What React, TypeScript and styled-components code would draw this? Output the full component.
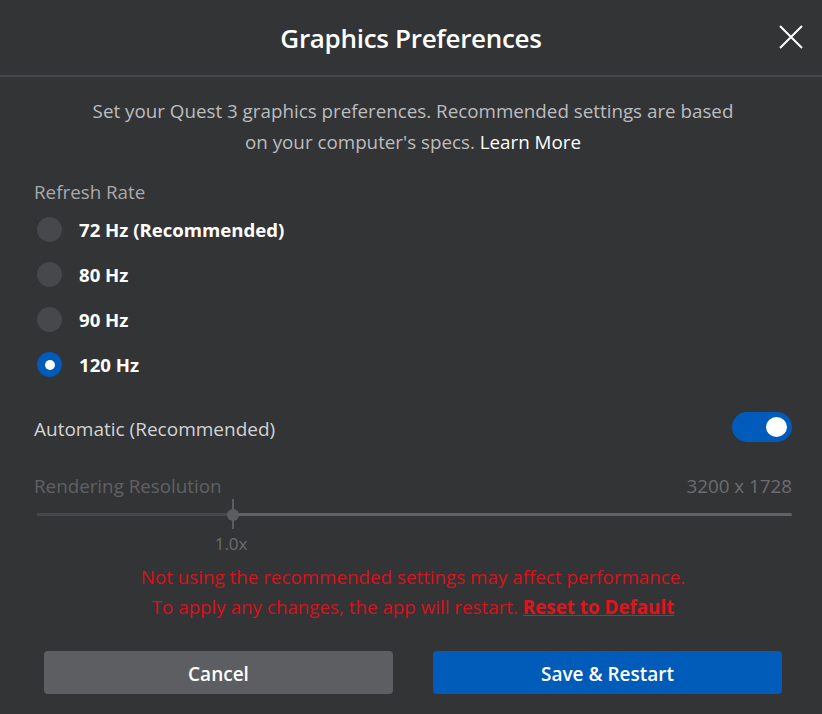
import React, { useState } from 'react';
import styled, { createGlobalStyle, css } from 'styled-components';

const GlobalStyle = createGlobalStyle`
  html, body {
    margin: 0;
    padding: 0;
    background: #333436;
  }
  body {
    font-family: "Open Sans", "Noto Sans", sans-serif;
  }
`;

const Dialog = styled.div`
  width: 822px;
  height: 714px;
  background: #333436;
  color: #ffffff;
  display: flex;
  flex-direction: column;
  box-sizing: border-box;
`;

const Header = styled.header`
  position: relative;
  height: 77px;
  display: flex;
  align-items: center;
  justify-content: center;
  border-bottom: 2px solid #46474a;
  box-sizing: border-box;
`;

const Title = styled.h1`
  margin: 0;
  font-size: 26px;
  line-height: 34px;
  font-weight: 600;
  letter-spacing: -0.3px;
`;

const CloseButton = styled.button`
  position: absolute;
  right: 16px;
  top: 22px;
  width: 30px;
  height: 30px;
  padding: 0;
  border: none;
  background: none;
  cursor: pointer;
  display: flex;
  align-items: center;
  justify-content: center;
`;

const Body = styled.div`
  display: flex;
  flex-direction: column;
  padding: 19px 30px 0 34px;
`;

const Intro = styled.p`
  margin: 0 0 22px;
  text-align: center;
  font-size: 18.8px;
  line-height: 31px;
  color: #bcbdbf;
`;

const LearnMore = styled.a`
  color: #ffffff;
  text-decoration: none;
  cursor: pointer;
`;

const SectionLabel = styled.div<{ $dim?: boolean }>`
  font-size: 18.8px;
  line-height: 24px;
  color: ${({ $dim }) => ($dim ? '#606164' : '#a8a9ab')};
`;

const RadioList = styled.div`
  display: flex;
  flex-direction: column;
  gap: 20px;
  margin-top: 13px;
  padding-left: 3px;
`;

const RadioRow = styled.label`
  display: flex;
  align-items: center;
  gap: 17px;
  cursor: pointer;
  height: 25px;
`;

const RadioDot = styled.span<{ $checked: boolean }>`
  width: 25px;
  height: 25px;
  border-radius: 50%;
  flex-shrink: 0;
  display: flex;
  align-items: center;
  justify-content: center;
  background: #47484b;
  ${({ $checked }) =>
    $checked &&
    css`
      background: #005bbb;
      &::after {
        content: '';
        width: 10px;
        height: 10px;
        border-radius: 50%;
        background: #ffffff;
      }
    `}
`;

const RadioText = styled.span`
  font-size: 18.6px;
  line-height: 25px;
  font-weight: 700;
  color: #ffffff;
`;

const ToggleRow = styled.div`
  display: flex;
  align-items: center;
  justify-content: space-between;
  margin-top: 35px;
`;

const ToggleLabel = styled.span`
  font-size: 19px;
  line-height: 26px;
  margin-top: 4px;
  color: #d2d3d5;
`;

const Toggle = styled.button<{ $on: boolean }>`
  position: relative;
  width: 60px;
  height: 30px;
  border: none;
  border-radius: 15px;
  padding: 0;
  cursor: pointer;
  background: ${({ $on }) => ($on ? '#005bbb' : '#5d5e61')};
  &::after {
    content: '';
    position: absolute;
    top: 5px;
    left: ${({ $on }) => ($on ? '34px' : '5px')};
    width: 21px;
    height: 20px;
    border-radius: 50%;
    background: #ffffff;
  }
`;

const ResolutionHead = styled.div`
  display: flex;
  justify-content: space-between;
  align-items: center;
  margin-top: 32px;
`;

const ResolutionValue = styled.span`
  font-size: 18.8px;
  line-height: 24px;
  color: #6c6d70;
`;

const SliderWrap = styled.div`
  position: relative;
  height: 30px;
  margin: 1px 0 0 3px;
`;

const Track = styled.div`
  position: absolute;
  left: 0;
  right: 0;
  top: 14px;
  height: 3px;
  background: #616265;
  border-radius: 2px;
`;

const TrackFill = styled.div`
  position: absolute;
  left: 0;
  top: 14px;
  height: 3px;
  background: #47484b;
  border-radius: 2px;
`;

const Tick = styled.div`
  position: absolute;
  top: 0;
  width: 2px;
  height: 30px;
  margin-left: -1px;
  background: #5c5d60;
`;

const Thumb = styled.div`
  position: absolute;
  top: 10px;
  width: 12px;
  height: 12px;
  margin-left: -6px;
  border-radius: 50%;
  background: #5c5d60;
`;

const ScaleLabel = styled.div`
  position: relative;
  height: 24px;
  margin-top: 3px;
  font-size: 17px;
  line-height: 24px;
  color: #6c6d70;
`;

const ScaleText = styled.span`
  position: absolute;
  transform: translateX(-50%);
  top: 0;
`;

const Warning = styled.p`
  margin: 6px 0 0;
  text-align: center;
  font-size: 18.8px;
  line-height: 30px;
  color: #d8121b;
`;

const ResetLink = styled.a`
  font-weight: 700;
  color: #e0141d;
  text-decoration: underline;
  cursor: pointer;
`;

const Footer = styled.footer`
  display: grid;
  grid-template-columns: 1fr 1fr;
  gap: 40px;
  padding: 29px 40px 0 44px;
`;

const Button = styled.button<{ $primary?: boolean }>`
  height: 43px;
  border: none;
  border-radius: 4px;
  font-family: inherit;
  font-size: 19px;
  font-weight: 600;
  color: #ffffff;
  cursor: pointer;
  padding-top: 3px;
  background: ${({ $primary }) => ($primary ? '#005bb9' : '#5d5e61')};
`;

const rates = ['72 Hz (Recommended)', '80 Hz', '90 Hz', '120 Hz'];

export default function App() {
  const [rate, setRate] = useState(3);
  const [auto, setAuto] = useState(true);
  const sliderPos = 26; // percent

  return (
    <>
      <GlobalStyle />
      <Dialog>
        <Header>
          <Title>Graphics Preferences</Title>
          <CloseButton aria-label="Close">
            <svg width="24" height="24" viewBox="0 0 24 24">
              <path d="M1 1 L23 23 M23 1 L1 23" stroke="#ffffff" strokeWidth="2" fill="none" />
            </svg>
          </CloseButton>
        </Header>
        <Body>
          <Intro>
            Set your Quest 3 graphics preferences. Recommended settings are based
            <br />
            on your computer's specs. <LearnMore>Learn More</LearnMore>
          </Intro>
          <SectionLabel>Refresh Rate</SectionLabel>
          <RadioList>
            {rates.map((r, i) => (
              <RadioRow key={r} onClick={() => setRate(i)}>
                <RadioDot $checked={rate === i} />
                <RadioText>{r}</RadioText>
              </RadioRow>
            ))}
          </RadioList>
          <ToggleRow>
            <ToggleLabel>Automatic (Recommended)</ToggleLabel>
            <Toggle $on={auto} onClick={() => setAuto(!auto)} aria-label="Automatic" />
          </ToggleRow>
          <ResolutionHead>
            <SectionLabel $dim>Rendering Resolution</SectionLabel>
            <ResolutionValue>3200 x 1728</ResolutionValue>
          </ResolutionHead>
          <SliderWrap>
            <Track />
            <TrackFill style={{ width: `${sliderPos}%` }} />
            <Tick style={{ left: `${sliderPos}%` }} />
            <Thumb style={{ left: `${sliderPos}%` }} />
          </SliderWrap>
          <ScaleLabel>
            <ScaleText style={{ left: `${sliderPos}%` }}>1.0x</ScaleText>
          </ScaleLabel>
          <Warning>
            Not using the recommended settings may affect performance.
            <br />
            To apply any changes, the app will restart. <ResetLink>Reset to Default</ResetLink>
          </Warning>
        </Body>
        <Footer>
          <Button>Cancel</Button>
          <Button $primary>Save &amp; Restart</Button>
        </Footer>
      </Dialog>
    </>
  );
}
